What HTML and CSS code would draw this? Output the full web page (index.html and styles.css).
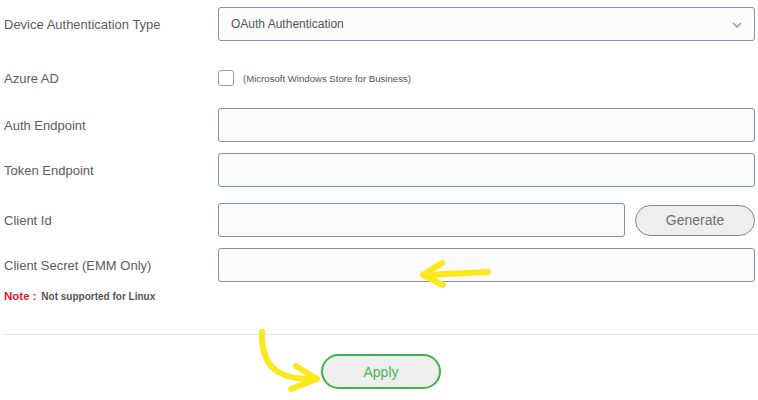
FILE: index.html
```html
<!DOCTYPE html>
<html lang="en">
<head>
    <meta charset="UTF-8">
    <title>Device Authentication</title>
    <link rel="stylesheet" href="styles.css">
</head>
<body>
    <div id="page">
        <form class="settings">
            <div class="row row-type">
                <label class="label">Device Authentication Type</label>
                <div class="select">
                    <span>OAuth Authentication</span>
                    <svg class="chevron" width="10" height="6" viewBox="0 0 10 6"><path d="M1 1l4 4 4-4" fill="none" stroke="#8a8f99" stroke-width="1.3"/></svg>
                </div>
            </div>
            <div class="row row-azure">
                <label class="label">Azure AD</label>
                <span class="checkbox"></span>
                <span class="hint">(Microsoft Windows Store for Business)</span>
            </div>
            <div class="row row-auth">
                <label class="label">Auth Endpoint</label>
                <input class="field" type="text">
            </div>
            <div class="row row-token">
                <label class="label">Token Endpoint</label>
                <input class="field" type="text">
            </div>
            <div class="row row-client">
                <label class="label">Client Id</label>
                <input class="field field-short" type="text">
                <button type="button" class="btn-generate">Generate</button>
            </div>
            <div class="row row-secret">
                <label class="label">Client Secret (EMM Only)</label>
                <input class="field" type="text">
            </div>
            <p class="note"><span class="note-title">Note :</span> Not supported for Linux</p>
        </form>
        <div class="footer">
            <button type="button" class="btn-apply">Apply</button>
        </div>
        <svg class="marks" width="758" height="400" viewBox="0 0 758 400">
            <g fill="none" stroke="#fde81c" stroke-width="6" stroke-linecap="round" stroke-linejoin="round">
                <path d="M488 265 L424 268"/>
                <path d="M442 256 L423 268 L443 278"/>
                <path d="M262 325 C 261 362, 280 373, 316 372"/>
                <path d="M296 359 L317 372 L291 382"/>
            </g>
        </svg>
    </div>
</body>
</html>
```
FILE: styles.css
```css
*{
    margin:0;
    padding:0;
    box-sizing:border-box;
}
body{
    font-family:"Liberation Sans", Arial, sans-serif;
    color:#555;
    background:#fff;
}
#page{
    position:relative;
    width:758px;
    height:400px;
    padding-left:4px;
}
.row{
    display:flex;
    align-items:center;
    height:34px;
}
.row-type{ margin-top:7px; }
.row-azure{ margin-top:20px; }
.row-auth{ margin-top:13px; }
.row-token{ margin-top:11px; }
.row-client{ margin-top:16px; }
.row-secret{ margin-top:11px; }
.label{
    width:214px;
    flex:none;
    font-size:13px;
    color:#5c5c5c;
}
.select,.field{
    width:537px;
    height:34px;
    border:1px solid #8390a6;
    border-radius:3px;
    background:#fbfbfb;
}
.select{
    display:flex;
    align-items:center;
    justify-content:space-between;
    padding:0 12px 0 12px;
    font-size:12px;
    color:#555;
    background:#fcfcfc;
}
.chevron{
    margin-top:1px;
}
.field{
    font:inherit;
    outline:none;
}
.field-short{
    width:407px;
}
.checkbox{
    width:16px;
    height:16px;
    border:1px solid #9a9a9a;
    border-radius:3px;
    background:#fff;
}
.hint{
    margin-left:9px;
    font-size:9.6px;
    color:#555;
}
.btn-generate{
    width:120px;
    height:31px;
    margin-left:10px;
    border:1px solid #7d8594;
    border-radius:16px;
    background:#eeeeee;
    font-family:inherit;
    font-size:14px;
    color:#6c707a;
}
.note{
    margin-top:7px;
    height:14px;
    line-height:14px;
    font-size:10px;
    font-weight:bold;
    color:#555;
}
.note-title{
    font-size:11.5px;
    color:#e21a30;
    margin-right:2px;
}
.footer{
    margin-top:31px;
    border-top:1px solid #e6e6e6;
    padding-top:19px;
    display:flex;
    justify-content:center;
}
.btn-apply{
    width:120px;
    height:35px;
    border:2px solid #3db54a;
    border-radius:18px;
    background:#eeeeee;
    font-family:inherit;
    font-size:14px;
    color:#4bb356;
}
.marks{
    position:absolute;
    left:0;
    top:0;
    pointer-events:none;
}
```
